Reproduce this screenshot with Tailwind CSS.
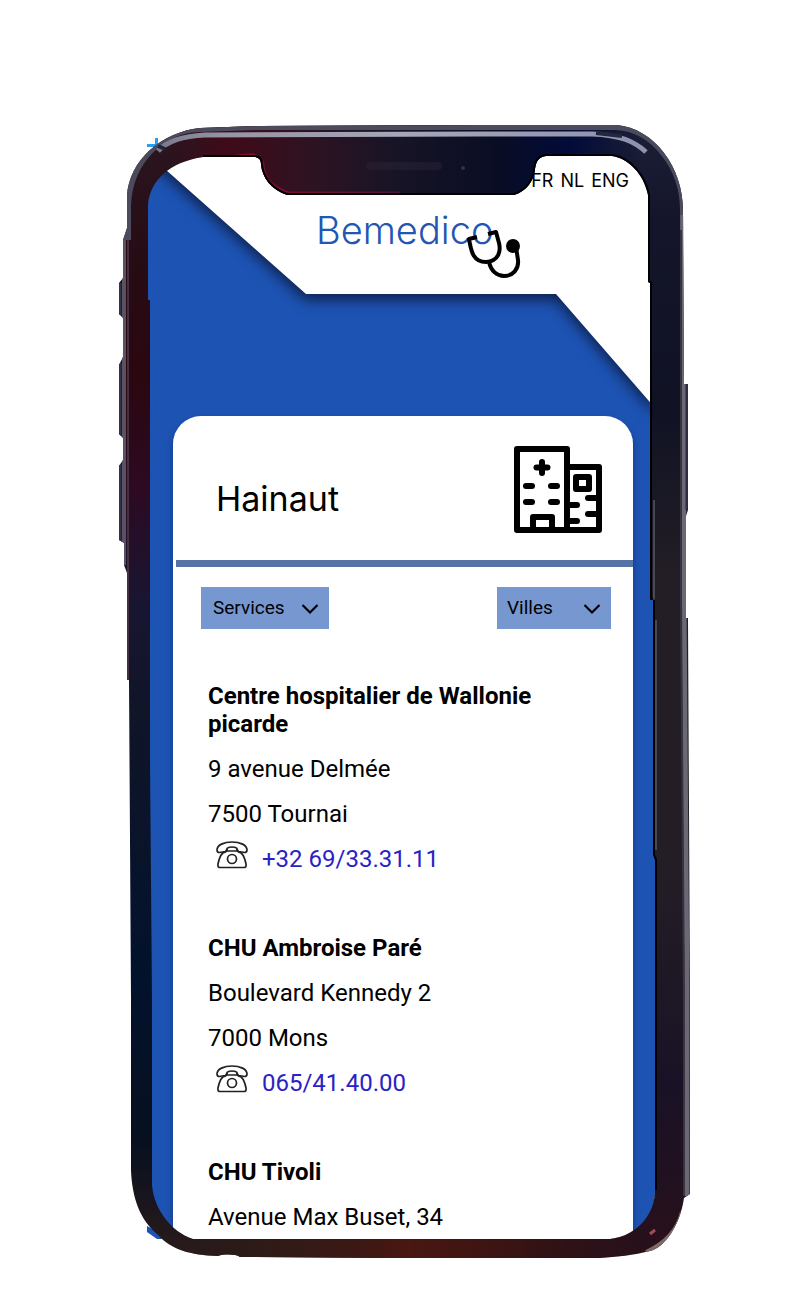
<!DOCTYPE html>
<html lang="fr">
<head>
<meta charset="utf-8">
<meta name="viewport" content="width=device-width, initial-scale=1">
<title>Bemedico – Hainaut</title>
<script src="https://cdn.jsdelivr.net/npm/@tailwindcss/browser@4"></script>
</head>
<body class="bg-white font-[Roboto,sans-serif] text-black">
<svg class="hidden" aria-hidden="true">
  <symbol id="phone" viewBox="0 0 32 28">
    <g fill="none" stroke="#222" stroke-width="1.7" stroke-linejoin="round">
      <path d="M1 9C1 4 8 1 16 1s15 3 15 8c0 2-1 2.500-2.500 2.500L23 10.500c-1.500-.4-1.500-1-1.700-2C21 6.500 19 6 16 6s-5 .5-5.300 2.500c-.2 1-.2 1.600-1.700 2L3.500 11.500C2 11.500 1 11 1 9z"/>
      <path d="M11 10v-2M21 10v-2M11 10h10c1 1 2 1.500 4 2 3 2 4 6 5 11 .5 2.500-.5 3.500-2 3.500H4c-1.500 0-2.500-1-2-3.500 1-5 2-9 5-11 2-.5 3-1 4-2z"/>
      <circle cx="16" cy="18" r="4.500"/>
    </g>
  </symbol>
</svg>

<main class="relative mx-auto w-full max-w-[800px] pt-[154px] pb-[60px]">
  <span class="absolute top-[144px] left-[147px] h-[3px] w-3 bg-[#2a9df4]"></span>
  <span class="absolute top-[138px] left-[155px] h-3 w-[3px] bg-[#2a9df4]"></span>

  <div class="relative mr-[145px] ml-[148px] overflow-hidden rounded-[48px] bg-[#1d53b3]">
    <header class="relative h-[262px]">
      <svg class="absolute inset-0 h-full w-full drop-shadow-[0_6px_7px_rgba(10,20,50,0.8)]" viewBox="0 0 507 262" preserveAspectRatio="none" aria-hidden="true">
        <path d="M0 0 158 140H408L507 254V0z" fill="#fff"/>
      </svg>
      <nav class="relative flex justify-end gap-[7px] pt-4 pr-[26px] font-[Inter,sans-serif] text-lg leading-[22px]" aria-label="Langue">
        <a href="#fr">FR</a><a href="#nl">NL</a><a href="#eng">ENG</a>
      </nav>
      <div class="relative ml-[168px] w-52 pt-[14px]">
        <a href="#" class="block font-[Inter,sans-serif] text-[38px] leading-12 font-light text-[#2356b0]">Bemedico</a>
        <svg class="absolute top-9 left-[149px] h-[50px] w-[56px]" viewBox="0 0 56 50" fill="none" stroke="#000" stroke-width="4" stroke-linejoin="round" aria-hidden="true">
          <path d="M12 9 4 11C6 21 7 34 21 34 34 33 36 23 34 15L31 4 23 6"/>
          <path d="M24 34C26 43 32 48 39 48 48 48 54 41 53 32L51 19"/>
          <circle cx="48" cy="18" r="5" fill="#000"/>
        </svg>
      </div>
    </header>

    <section class="mr-[22px] ml-[25px] rounded-t-[28px] bg-white pb-[9px] shadow-[0_4px_6px_rgba(10,30,90,0.5)]">
      <div class="flex h-[144px] items-start justify-between pt-[30px] pr-[31px] pl-[43px]">
        <h1 class="pt-[31px] font-[Inter,sans-serif] text-[34px] leading-11">Hainaut</h1>
        <svg class="h-[87px] w-[88px]" viewBox="0 0 88 87" fill="none" stroke="#000" stroke-width="6" stroke-linecap="round" stroke-linejoin="round" aria-hidden="true">
          <path d="M3 3H53V84H3zM55 21H85V84H53"/>
          <path d="M28 16v11M22.500 21.500h11M12 40h6M37 40h6M12 56h6M37 56h6M19 83V71H38V83M84 52H74M84 68H74M55 59H63M55 75H63" />
          <path d="M62 31H75V43H62z"/>
        </svg>
      </div>
      <hr class="ml-[3px] h-[7px] border-0 bg-[#5872a6]">

      <form class="flex justify-between pt-5 pr-[22px] pl-7">
        <div class="relative h-[42px] w-32">
          <select aria-label="Services" class="h-full w-full appearance-none bg-[#7797d1] pl-3 text-[19px] leading-7"><option>Services</option></select>
          <svg class="pointer-events-none absolute top-4 right-[10px] h-3 w-[18px]" viewBox="0 0 18 12" fill="none" stroke="#000" stroke-width="2.200" aria-hidden="true"><path d="M1.500 2 9 9.500 16.500 2"/></svg>
        </div>
        <div class="relative h-[42px] w-[114px]">
          <select aria-label="Villes" class="h-full w-full appearance-none bg-[#7797d1] pl-[10px] text-[19px] leading-7"><option>Villes</option></select>
          <svg class="pointer-events-none absolute top-4 right-[10px] h-3 w-[18px]" viewBox="0 0 18 12" fill="none" stroke="#000" stroke-width="2.200" aria-hidden="true"><path d="M1.500 2 9 9.500 16.500 2"/></svg>
        </div>
      </form>

      <div class="flex flex-col gap-[61px] pt-[53px] pr-[70px] pl-[35px] text-2xl leading-7">
        <article class="flex flex-col gap-[17px]">
          <h2 class="font-bold">Centre hospitalier de Wallonie picarde</h2>
          <p>9 avenue Delmée</p>
          <p>7500 Tournai</p>
          <p class="flex gap-[14px] pl-2"><svg class="-mt-1 h-7 w-8" aria-hidden="true"><use href="#phone"/></svg><a class="text-[#2a22c4]" href="tel:+3269333111">+32 69/33.31.11</a></p>
        </article>
        <article class="flex flex-col gap-[17px]">
          <h2 class="font-bold">CHU Ambroise Paré</h2>
          <p>Boulevard Kennedy 2</p>
          <p>7000 Mons</p>
          <p class="flex gap-[14px] pl-2"><svg class="-mt-1 h-7 w-8" aria-hidden="true"><use href="#phone"/></svg><a class="text-[#2a22c4]" href="tel:+3265414000">065/41.40.00</a></p>
        </article>
        <article class="flex flex-col gap-[17px]">
          <h2 class="font-bold">CHU Tivoli</h2>
          <p>Avenue Max Buset, 34</p>
        </article>
      </div>
    </section>
  </div>

  <!-- Handset frame, laid over the screen -->
  <svg class="pointer-events-none absolute inset-0 h-full w-full" viewBox="0 0 800 1300" preserveAspectRatio="none" aria-hidden="true">
    <defs>
      <linearGradient id="left" x1="0" y1="127" x2="0" y2="1257" gradientUnits="userSpaceOnUse">
        <stop offset="0" stop-color="#2b1621"/><stop offset=".12" stop-color="#260c14"/><stop offset=".22" stop-color="#2b0710"/><stop offset=".32" stop-color="#2c0a22"/><stop offset=".42" stop-color="#191531"/><stop offset=".52" stop-color="#101528"/><stop offset=".75" stop-color="#02122c"/><stop offset=".9" stop-color="#08101f"/><stop offset="1" stop-color="#2a1b1b"/>
      </linearGradient>
      <linearGradient id="right" x1="0" y1="127" x2="0" y2="1257" gradientUnits="userSpaceOnUse">
        <stop offset="0" stop-color="#1c1f38"/><stop offset=".08" stop-color="#14152a"/><stop offset=".25" stop-color="#101224"/><stop offset=".4" stop-color="#231e25"/><stop offset=".65" stop-color="#231e25"/><stop offset=".85" stop-color="#191226"/><stop offset="1" stop-color="#29101a"/>
      </linearGradient>
      <linearGradient id="top" x1="170" y1="0" x2="640" y2="0" gradientUnits="userSpaceOnUse">
        <stop offset="0" stop-color="#3c0b18" stop-opacity="0"/><stop offset=".12" stop-color="#400a19"/><stop offset=".3" stop-color="#2e1322"/><stop offset=".48" stop-color="#171426"/><stop offset=".7" stop-color="#090d24"/><stop offset=".85" stop-color="#020b3a"/><stop offset="1" stop-color="#020b3a" stop-opacity="0"/>
      </linearGradient>
      <linearGradient id="bottom" x1="165" y1="0" x2="650" y2="0" gradientUnits="userSpaceOnUse">
        <stop offset="0" stop-color="#2a1b1b" stop-opacity="0"/><stop offset=".15" stop-color="#2a1b18"/><stop offset=".4" stop-color="#3c1814"/><stop offset=".5" stop-color="#4a1712"/><stop offset=".75" stop-color="#361313"/><stop offset="1" stop-color="#29101a" stop-opacity="0"/>
      </linearGradient>
      <linearGradient id="shine" x1="150" y1="0" x2="650" y2="0" gradientUnits="userSpaceOnUse">
        <stop offset="0" stop-color="#77768a"/><stop offset=".15" stop-color="#9695a4"/><stop offset=".5" stop-color="#a6a6b8"/><stop offset=".8" stop-color="#989ab2"/><stop offset="1" stop-color="#8d91ac"/>
      </linearGradient>
      <linearGradient id="rim" x1="230" y1="0" x2="540" y2="0" gradientUnits="userSpaceOnUse">
        <stop offset="0" stop-color="#8f0c2b"/><stop offset=".45" stop-color="#59143c"/><stop offset="1" stop-color="#06104a"/>
      </linearGradient>
      <clipPath id="body">
        <path clip-rule="evenodd" d="M200 128 258 126 480 125H616C655 128 683 168 683 210L684 384H688V510L686 516V618H688L690 1000V1194L684 1198C680 1226 664 1248 650 1251 634 1255 616 1257 600 1258H385L240 1257C236 1254 224 1254 218 1256 190 1255 172 1250 158 1235 140 1220 132 1198 131 1170V1000L129 680H127V573L124 565V543L119 540V466L123 460V438L119 434V365L123 357V318L119 314V283L123 278V240L127 228V196C129 160 162 132 200 128zM203 157C170 162 150 180 148 205V300H150V760L152 1000V1185C154 1210 172 1232 193 1239H610C640 1235 655 1212 655 1190V860L653 855V600H650V283L648 282V195C644 174 628 158 612 156H546C538 157 536 162 535 169 534 180 527 191 514 195H287C272 190 262 178 261 164 261 159 258 157 254 157z"/>
      </clipPath>
    </defs>
    <path d="M147 1232V1226L172 1239H157z" fill="#1d53b3"/>
    <g clip-path="url(#body)">
      <rect x="110" y="120" width="290" height="1140" fill="url(#left)"/>
      <rect x="400" y="120" width="300" height="1140" fill="url(#right)"/>
      <rect x="170" y="120" width="470" height="80" fill="url(#top)"/>
      <rect x="165" y="1236" width="485" height="24" fill="url(#bottom)"/>
      <path d="M127 240V205C129 160 162 129 200 128L258 126H616C655 128 684 168 684 210V230" fill="none" stroke="#4b4b5d" stroke-width="8"/>
      <path d="M158 151C168 140 184 136 205 135L480 134H592C620 135 634 141 646 152" fill="none" stroke="url(#shine)" stroke-width="5"/>
      <path d="M596 133 622 136M158 146 165 149" stroke="#24263c" stroke-width="4"/>
      <path d="M124 240V565" stroke="#585262" stroke-width="4"/>
      <path d="M120 283V315M120 363V436M120 464V543" stroke="#35304a" stroke-width="3"/>
      <path d="M128 240V680" stroke="#46303f" stroke-width="2"/>
      <path d="M683 215 684 600 687 1000V1196" fill="none" stroke="#6b6875" stroke-width="5"/>
      <path d="M681 230V600L684 1000V1196" fill="none" stroke="#38333f" stroke-width="2"/>
      <path d="M687 384V510" stroke="#302d42" stroke-width="3"/>
      <path d="M172 176C180 164 204 158 253 155 260 157 263 160 263 166 264 180 276 189 289 193H400" fill="none" stroke="url(#rim)" stroke-width="3"/>
      <path d="M203 157H254C258 157 261 159 261 164 262 178 272 190 287 195H514C527 191 534 180 535 169 536 162 538 157 546 156H612C628 158 644 174 648 195V282L650 283V600H653V855L655 860V1190" fill="none" stroke="#000" stroke-width="4"/>
      <path d="M654 500V600M656 620V850" stroke="#6f7483" stroke-width="1"/>
      <path d="M370 166H438" stroke="#302a3a" stroke-width="8" stroke-linecap="round" opacity=".4"/>
      <circle cx="463" cy="168" r="2" fill="#333244"/>
      <path d="M650 1234 655 1230" stroke="#a24b58" stroke-width="3"/>
      <path d="M646 1252C668 1242 678 1228 682 1212" fill="none" stroke="#7d6a66" stroke-width="4"/>
    </g>
  </svg>
</main>
</body>
</html>
